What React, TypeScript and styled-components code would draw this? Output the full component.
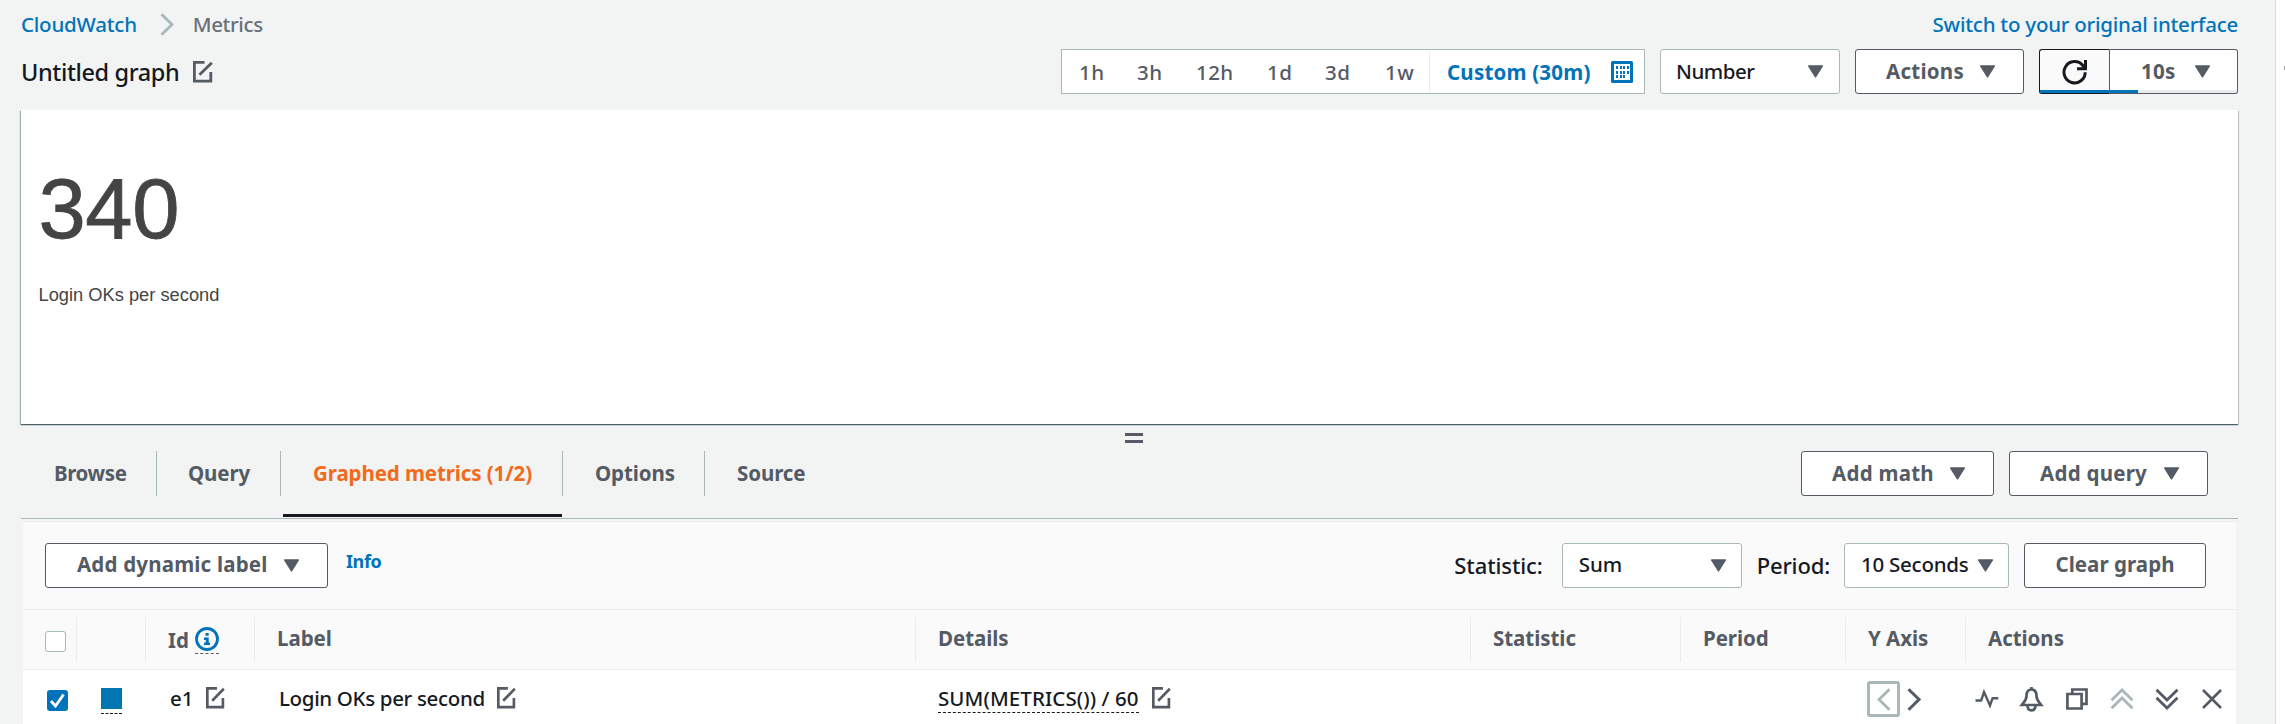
import React from "react";
import styled, { createGlobalStyle, css } from "styled-components";

const c = {
  page: "#f2f3f3",
  link: "#0073bb",
  text: "#16191f",
  muted: "#545b64",
  grey: "#687078",
  border: "#aab7b8",
  line: "#eaeded",
  soft: "#fafafa",
};

const Global = createGlobalStyle`
  * { box-sizing: border-box; }
  body {
    margin: 0;
    background: #fdfdfd;
    color: ${c.text};
    font-family: "Noto Sans", "Open Sans", sans-serif;
    font-size: 20.5px;
    font-weight: 480;
    line-height: 28px;
    white-space: nowrap;
  }
`;

const Shell = styled.div`
  display: flex;
  height: 724px;
  overflow: hidden;
`;
const Main = styled.main`
  width: 2276px;
  padding: 0 37px 0 21px;
  background: ${c.page};
  border-right: 1px solid #d5dbdb;
`;
const SideStrip = styled.aside`
  flex: 1;
  display: flex;
  justify-content: flex-end;
  padding-top: 66px;
  background: #fff;
`;
const SideGrip = styled.div`
  width: 1px;
  height: 4px;
  background: #aaa;
`;

const Label = styled.span<{ $ls?: number; $size?: number; $color?: string }>`
  letter-spacing: ${(p) => p.$ls ?? 0}px;
  ${(p) => p.$size && css`font-size: ${p.$size}px;`}
  ${(p) => p.$color && css`color: ${p.$color};`}
`;
const Link = styled.a<{ $ls?: number }>`
  color: ${c.link};
  letter-spacing: ${(p) => p.$ls ?? 0}px;
`;

const TopBar = styled.header`
  display: flex;
  align-items: center;
  justify-content: space-between;
  height: 49px;
  padding-bottom: 1px;
`;
const Crumbs = styled.nav`
  display: flex;
  align-items: center;
  svg { margin: 0 19px 0 23px; }
`;
const TitleBar = styled.div`
  display: flex;
  align-items: center;
  justify-content: space-between;
  height: 45px;
`;
const Title = styled.div`
  display: flex;
  align-items: center;
  gap: 14px;
`;
const Toolbar = styled.div<{ $gap?: number }>`
  display: flex;
  align-items: center;
  gap: ${(p) => p.$gap ?? 15}px;
`;

const Ranges = styled.div`
  display: flex;
  width: 584px;
  height: 45px;
  padding: 1px 0;
  background: #fff;
  border: 1px solid ${c.border};
`;
const RangeList = styled.div`
  display: grid;
  grid-template-columns: 58px 59px 71px 58px 60px 44px;
  align-items: center;
  width: 368px;
  padding-left: 17px;
  color: ${c.muted};
  border-right: 1px solid ${c.line};
`;
const CustomRange = styled.div`
  flex: 1;
  display: flex;
  align-items: center;
  justify-content: space-between;
  padding: 0 11px 0 17px;
  color: ${c.link};
  font-weight: 700;
`;

const Control = styled.button<{ $w: number; $pad: string }>`
  display: flex;
  align-items: center;
  justify-content: space-between;
  width: ${(p) => p.$w}px;
  height: 45px;
  padding: ${(p) => p.$pad};
  padding-bottom: 2px;
  font: inherit;
  line-height: 28px;
  background: #fff;
  border-radius: 3px;
`;
const Select = styled(Control)`
  color: ${c.text};
  border: 1px solid ${c.border};
`;
const Button = styled(Control)`
  color: ${c.muted};
  font-weight: 700;
  letter-spacing: 0.25px;
  border: 1px solid ${c.muted};
`;
const ClearButton = styled(Button)`
  justify-content: center;
  margin-left: 15px;
  letter-spacing: 0.05px;
`;
const RefreshGroup = styled.div`
  position: relative;
  display: flex;
  width: 199px;
`;
const RefreshButton = styled(Button)`
  justify-content: center;
  padding-bottom: 0;
  color: ${c.text};
  background: ${c.soft};
  border-color: ${c.text};
  border-right-color: ${c.muted};
  border-radius: 3px 0 0 3px;
`;
const IntervalButton = styled(Button)`
  border-left: 0;
  border-radius: 0 3px 3px 0;
`;
const Progress = styled.div`
  position: absolute;
  left: 1px;
  right: 2px;
  bottom: 1px;
  height: 3px;
  background: ${c.line};
`;
const ProgressFill = styled.div`
  width: 98px;
  height: 100%;
  background: ${c.link};
`;

const GraphPanel = styled.section`
  height: 314px;
  margin-top: 16px;
  padding: 44px 0 0 17.5px;
  color: #444;
  font-family: "Liberation Sans", Arial, sans-serif;
  font-weight: 400;
  background: #fff;
  box-shadow: 0 1px 1px 0 rgba(0, 28, 36, 0.5), 1px 1px 1px 0 rgba(0, 28, 36, 0.15), -1px 1px 1px 0 rgba(0, 28, 36, 0.25);
`;
const BigNumber = styled.div`
  font-size: 85px;
  line-height: 110px;
  letter-spacing: -0.4px;
  -webkit-text-stroke: 0.8px #444;
`;
const NumberCaption = styled.div`
  margin-top: 19px;
  font-size: 18.3px;
  line-height: 24px;
  letter-spacing: 0;
`;
const Resize = styled.div`
  display: flex;
  flex-direction: column;
  gap: 4px;
  width: 18px;
  height: 27px;
  margin-left: 1104px;
  padding-top: 9px;
`;
const ResizeBar = styled.i`
  height: 3px;
  background: ${c.muted};
`;

const TabBar = styled.div`
  display: flex;
  align-items: flex-start;
  justify-content: space-between;
  height: 68px;
  padding-right: 30px;
  border-bottom: 1px solid ${c.border};
`;
const Tabs = styled.nav`
  display: flex;
  color: ${c.muted};
  font-weight: 700;
`;
const Tab = styled.a<{ $w: number; $pad: number; $ls?: number; $active?: boolean }>`
  position: relative;
  width: ${(p) => p.$w}px;
  height: 45px;
  padding-left: ${(p) => p.$pad}px;
  line-height: 45px;
  letter-spacing: ${(p) => p.$ls ?? -0.1}px;
  border-right: 1px solid ${c.border};
  &:last-child { border-right: 0; }
  ${(p) =>
    p.$active &&
    css`
      color: #f26b1d;
      &::after {
        content: "";
        position: absolute;
        left: 2px;
        right: 0;
        bottom: -21px;
        height: 3px;
        background: ${c.text};
      }
    `}
`;

const MetricsPanel = styled.section`
  margin: 2px 2px 0 2px;
  background: #fff;
  border-top: 1px solid ${c.line};
`;
const Filters = styled.div`
  display: flex;
  align-items: center;
  justify-content: space-between;
  height: 87px;
  padding: 0 30px 1px 22px;
  background: ${c.soft};
`;
const Info = styled(Link)`
  margin: 0 0 8px 3px;
  font-size: 18px;
  font-weight: 700;
  letter-spacing: -0.4px;
`;
const FieldLabel = styled.span<{ $ml?: number; $mr: number; $ls: number }>`
  font-size: 22px;
  letter-spacing: ${(p) => p.$ls}px;
  margin: 0 ${(p) => p.$mr}px 0 ${(p) => p.$ml ?? 0}px;
`;

const Row = styled.div<{ $head?: boolean }>`
  display: grid;
  grid-template-columns: 54px 69px 109px 661px 555px 210px 165px 120px 1fr;
  align-items: center;
  height: ${(p) => (p.$head ? 61 : 58)}px;
  ${(p) =>
    p.$head &&
    css`
      color: ${c.muted};
      font-weight: 700;
      letter-spacing: -0.05px;
      background: ${c.soft};
      border-top: 1px solid ${c.line};
      border-bottom: 1px solid ${c.line};
    `}
`;
const Cell = styled.div<{ $pad?: number; $gap?: number; $line?: boolean; $up?: number }>`
  display: flex;
  align-items: center;
  gap: ${(p) => p.$gap ?? 0}px;
  height: 45px;
  padding: 0 0 ${(p) => p.$up ?? 0}px ${(p) => p.$pad ?? 22}px;
  border-right: 1px solid ${(p) => (p.$line ? c.line : "transparent")};
`;
const Check = styled.span<{ $on?: boolean }>`
  display: flex;
  width: 21px;
  height: 21px;
  margin-top: 3px;
  background: ${(p) => (p.$on ? c.link : "#fff")};
  border: ${(p) => (p.$on ? "0" : `1.5px solid ${c.border}`)};
  border-radius: 3px;
`;
const Dotted = styled.span<{ $pb: number; $mt: number; $dark?: boolean }>`
  display: flex;
  margin-top: ${(p) => p.$mt}px;
  padding-bottom: ${(p) => p.$pb}px;
  border-bottom: 1px dashed ${(p) => (p.$dark ? c.text : c.muted)};
`;
const Swatch = styled.i`
  width: 21px;
  height: 21px;
  background: #0077b3;
`;
const AxisButton = styled.span`
  display: grid;
  place-items: center;
  width: 33px;
  height: 36px;
  border: 3px solid ${c.border};
  border-radius: 3px;
`;
const RowActions = styled.div`
  display: grid;
  grid-template-columns: repeat(6, 45px);
  justify-items: center;
  align-items: center;
  margin-left: -2px;
`;
const CaretSvg = styled.svg`
  margin-top: 2px;
`;

const Caret = () => (
  <CaretSvg width="17" height="13" viewBox="0 0 17 13">
    <path d="M1.600 1h13.800L8.500 12z" fill={c.muted} stroke={c.muted} strokeWidth="1.400" strokeLinejoin="round" />
  </CaretSvg>
);
const Edit = ({ size = 20 }: { size?: number }) => (
  <svg width={size} height="22" viewBox="0 0 20 22" preserveAspectRatio="none" fill="none" stroke={c.muted} strokeWidth="2.800">
    <path d="M11.500 1.400H1.400v18.800h16.400V11" />
    <path d="M6.500 13.800 18.800 1.800" />
  </svg>
);
const Chevron = ({ color, flip, w = 2.8 }: { color: string; flip?: boolean; w?: number }) => (
  <svg width="14" height="23" viewBox="0 0 14 23" fill="none" stroke={color} strokeWidth={w}>
    <path d={flip ? "M12.500 1.200 2 11.500l10.500 10.300" : "M1.500 1.200 12 11.500 1.500 21.800"} />
  </svg>
);
const Calendar = () => (
  <svg width="22" height="22" viewBox="0 0 22 22">
    <rect width="22" height="22" rx="1.500" fill={c.link} />
    <rect x="3" y="3" width="16" height="16" fill="#fff" />
    {[5, 10, 14].map((y, r) =>
      [5, 9, 12, 16].slice(0, r === 2 ? 3 : 4).map((x) => (
        <rect key={`${x}-${y}`} x={x} y={y} width="2" height="3" fill={c.link} />
      ))
    )}
  </svg>
);
const Refresh = () => (
  <svg width="26" height="26" viewBox="0 0 26 26" fill="none" stroke={c.text} strokeWidth="3">
    <path d="M23.200 13.200A10.600 10.700 0 1 1 20.600 6.200L23 9" />
    <path d="M23.500 1v8.800h-8.500" />
  </svg>
);
const InfoIcon = () => (
  <svg width="24" height="24" viewBox="0 0 24 24">
    <circle cx="12" cy="12" r="10.500" fill="none" stroke={c.link} strokeWidth="2.800" />
    <path d="M10.500 6h3.200v2.800h-3.200zM9 10.500h4.700v5H15V18H9v-2.500h1.800V13H9z" fill={c.link} />
  </svg>
);
const line = { fill: "none", stroke: c.muted, strokeWidth: 2.7 };
const Pulse = () => (
  <svg width="24" height="20" viewBox="0 0 24 20" {...line} strokeWidth={2.4}>
    <path d="M.5 11.500h5.700L9 3l6 13.500 2.600-7.300h5.700" />
  </svg>
);
const Bell = () => (
  <svg width="25" height="25" viewBox="0 0 25 25" {...line}>
    <path d="M12.500 2.500c-4 0-5 3-5 6.500 0 4-2 5.500-4.700 9h19.400c-2.700-3.500-4.700-5-4.700-9 0-3.500-1-6.500-5-6.500z" />
    <path d="M12.500 0v3" />
    <path d="M8.600 19c0 2.700 1.500 4.300 3.900 4.300s3.900-1.600 3.900-4.300" />
  </svg>
);
const Copy = () => (
  <svg width="22" height="22" viewBox="0 0 22 22" {...line}>
    <path d="M1.400 6h14.200v14.500H1.400z" />
    <path d="M6.300 5.500V1.500h14.200v14.300h-4.500" />
  </svg>
);
const Double = ({ color, down }: { color: string; down?: boolean }) => (
  <svg width="24" height="22" viewBox="0 0 24 22" fill="none" stroke={color} strokeWidth="2.800">
    {down ? (
      <path d="M1.500 1.700 12 12 22.500 1.700M1.500 9.700 12 20 22.500 9.700" />
    ) : (
      <path d="M1.500 12.300 12 2l10.500 10.300M1.500 20.300 12 10l10.500 10.300" />
    )}
  </svg>
);
const Close = () => (
  <svg width="20" height="20" viewBox="0 0 20 20" {...line}>
    <path d="M1 1l18 18M19 1 1 19" />
  </svg>
);
const Tick = () => (
  <svg width="21" height="21" viewBox="0 0 21 21" fill="none" stroke="#fff" strokeWidth="2.800">
    <path d="M4 11l4.500 5L16.500 4.500" />
  </svg>
);

export default function App() {
  return (
    <Shell>
      <Global />
      <Main>
        <TopBar>
          <Crumbs>
            <Link $ls={-0.22}>CloudWatch</Link>
            <Chevron color={c.border} />
            <Label $ls={-0.4} $color={c.grey}>Metrics</Label>
          </Crumbs>
          <Link $ls={-0.24}>Switch to your original interface</Link>
        </TopBar>
        <TitleBar>
          <Title>
            <Label $size={23.5} $ls={-0.38}>Untitled graph</Label>
            <Edit />
          </Title>
          <Toolbar>
            <Ranges>
              <RangeList>
                {["1h", "3h", "12h", "1d", "3d", "1w"].map((r) => (
                  <Label key={r} $ls={0.4}>{r}</Label>
                ))}
              </RangeList>
              <CustomRange>
                <Label $ls={0.2}>Custom (30m)</Label>
                <Calendar />
              </CustomRange>
            </Ranges>
            <Select $w={180} $pad="0 15px">
              <Label $ls={-0.5}>Number</Label>
              <Caret />
            </Select>
            <Button $w={169} $pad="0 27px 0 30px">
              Actions
              <Caret />
            </Button>
            <RefreshGroup>
              <RefreshButton $w={71} $pad="0">
                <Refresh />
              </RefreshButton>
              <IntervalButton $w={128} $pad="0 26px 0 31px">
                10s
                <Caret />
              </IntervalButton>
              <Progress>
                <ProgressFill />
              </Progress>
            </RefreshGroup>
          </Toolbar>
        </TitleBar>

        <GraphPanel>
          <BigNumber>340</BigNumber>
          <NumberCaption>Login OKs per second</NumberCaption>
        </GraphPanel>
        <Resize>
          <ResizeBar />
          <ResizeBar />
        </Resize>

        <TabBar>
          <Tabs>
            <Tab $w={136} $pad={33} $ls={-0.4}>Browse</Tab>
            <Tab $w={124} $pad={31}>Query</Tab>
            <Tab $w={282} $pad={32} $ls={-0.1} $active>Graphed metrics (1/2)</Tab>
            <Tab $w={142} $pad={32}>Options</Tab>
            <Tab $w={142} $pad={32}>Source</Tab>
          </Tabs>
          <Toolbar>
            <Button $w={193} $pad="0 27px 0 30px">
              Add math
              <Caret />
            </Button>
            <Button $w={199} $pad="0 27px 0 30px">
              Add query
              <Caret />
            </Button>
          </Toolbar>
        </TabBar>

        <MetricsPanel>
          <Filters>
            <Toolbar>
              <Button $w={283} $pad="0 27px 0 31px">
                <Label $ls={0.18}>Add dynamic label</Label>
                <Caret />
              </Button>
              <Info>Info</Info>
            </Toolbar>
            <Toolbar $gap={0}>
              <FieldLabel $ls={-0.1} $mr={19}>Statistic:</FieldLabel>
              <Select $w={180} $pad="0 14px 0 16px">
                Sum
                <Caret />
              </Select>
              <FieldLabel $ls={-0.15} $ml={15} $mr={14}>Period:</FieldLabel>
              <Select $w={165} $pad="0 14px 0 16px">
                <Label $ls={-0.25}>10 Seconds</Label>
                <Caret />
              </Select>
              <ClearButton $w={182} $pad="0">Clear graph</ClearButton>
            </Toolbar>
          </Filters>
          <Row $head>
            <Cell $pad={22} $line>
              <Check />
            </Cell>
            <Cell $line />
            <Cell $line $gap={6}>
              Id
              <Dotted $pb={2} $mt={2}>
                <InfoIcon />
              </Dotted>
            </Cell>
            <Cell $line $up={3}>Label</Cell>
            <Cell $line $up={3}>Details</Cell>
            <Cell $line $up={3}>Statistic</Cell>
            <Cell $line $up={3}>Period</Cell>
            <Cell $line $up={3}>Y Axis</Cell>
            <Cell $up={3}>Actions</Cell>
          </Row>
          <Row>
            <Cell $pad={24}>
              <Check $on>
                <Tick />
              </Check>
            </Cell>
            <Cell $pad={24}>
              <Dotted $pb={4} $mt={3} $dark>
                <Swatch />
              </Dotted>
            </Cell>
            <Cell $pad={24} $gap={12} $up={2}>
              e1
              <Edit size={19} />
            </Cell>
            <Cell $pad={24} $gap={12} $up={2}>
              <Label $ls={-0.34}>Login OKs per second</Label>
              <Edit size={19} />
            </Cell>
            <Cell $gap={13} $up={2}>
              <Dotted $pb={0} $mt={1} $dark>
                <Label $ls={0.08}>SUM(METRICS()) / 60</Label>
              </Dotted>
              <Edit size={19} />
            </Cell>
            <Cell />
            <Cell />
            <Cell $pad={21} $gap={7}>
              <AxisButton>
                <Chevron color={c.border} flip />
              </AxisButton>
              <Chevron color={c.muted} w={3} />
            </Cell>
            <RowActions>
              <Pulse />
              <Bell />
              <Copy />
              <Double color={c.border} />
              <Double color={c.muted} down />
              <Close />
            </RowActions>
          </Row>
        </MetricsPanel>
      </Main>
      <SideStrip>
        <SideGrip />
      </SideStrip>
    </Shell>
  );
}
